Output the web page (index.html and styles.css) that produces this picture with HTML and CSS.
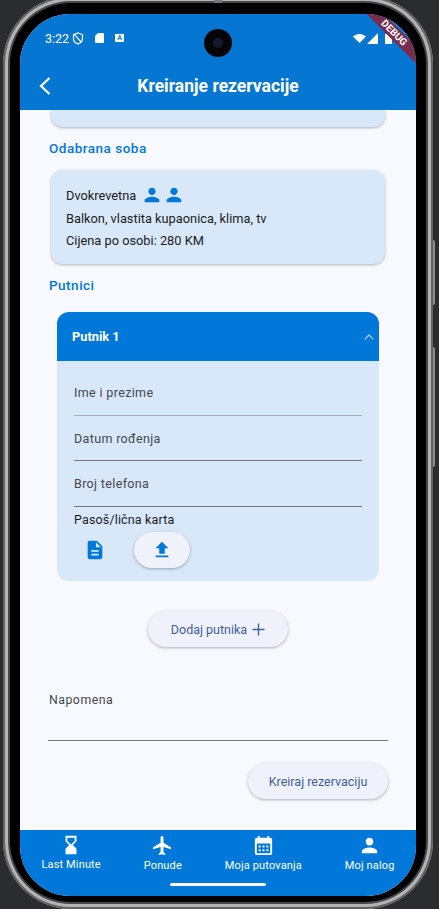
FILE: index.html
```html
<!DOCTYPE html>
<html>
<head>
  <title>Kreiranje rezervacije</title>
  <link rel="stylesheet" href="styles.css">
</head>
<body>
  <div class="device">
    <div class="top-nub"></div>
    <div class="side-btn side-btn-power"></div>
    <div class="side-btn side-btn-volume"></div>
    <div class="screen">
      <div class="camera"><div class="lens"></div></div>
      <div class="debug-banner">DEBUG</div>

      <header class="top">
        <div class="status">
          <div class="status-left">
            <span class="clock">3:22</span>
            <svg class="st-shield" viewBox="0 0 12 13" width="12" height="13"><path d="M6 1l4.500 1.600v4c0 2.600-1.900 4.600-4.500 5.400-2.600-.8-4.500-2.800-4.500-5.400v-4z M2.800 2.800l6.600 7.600" fill="none" stroke="#fff" stroke-width="1.200"/></svg>
            <svg class="st-sd" viewBox="0 0 9 10" width="9" height="10"><path d="M3 0h5a1 1 0 0 1 1 1v8a1 1 0 0 1-1 1H1a1 1 0 0 1-1-1V3z" fill="#fff"/></svg>
            <span class="st-box">A</span>
          </div>
          <div class="status-right">
            <svg viewBox="0 0 13 9" width="13" height="9"><path d="M0 2.600C3.600-.8 9.400-.8 13 2.600L6.500 9z" fill="#fff"/></svg>
            <svg viewBox="0 0 11 11" width="11" height="11"><path d="M11 0v11H0z" fill="#fff"/></svg>
            <svg class="st-bat" viewBox="0 0 7 11" width="7" height="11"><path d="M2 0h3v1h2v10H0V1h2z" fill="#fff"/></svg>
          </div>
        </div>
        <div class="appbar">
          <svg class="back" viewBox="0 0 12 18" width="12" height="18"><path d="M10.500 1L2 9l8.500 8" fill="none" stroke="#fff" stroke-width="2.200"/></svg>
          <h1>Kreiranje rezervacije</h1>
          <span></span>
        </div>
      </header>

      <main class="content">
        <div class="card card-cut">
          <p>Tip smjene</p>
        </div>

        <h2 class="section-title title-room">Odabrana soba</h2>
        <div class="card card-room">
          <div class="room-name">
            <span>Dvokrevetna</span>
            <span class="persons">
              <svg viewBox="0 0 24 24" width="22" height="22"><path d="M12 12c2.210 0 4-1.790 4-4s-1.790-4-4-4-4 1.790-4 4 1.790 4 4 4zm0 2c-2.670 0-8 1.340-8 4v2h16v-2c0-2.660-5.330-4-8-4z"/></svg>
              <svg viewBox="0 0 24 24" width="22" height="22"><path d="M12 12c2.210 0 4-1.790 4-4s-1.790-4-4-4-4 1.790-4 4 1.790 4 4 4zm0 2c-2.670 0-8 1.340-8 4v2h16v-2c0-2.660-5.330-4-8-4z"/></svg>
            </span>
          </div>
          <p>Balkon, vlastita kupaonica, klima, tv</p>
          <p>Cijena po osobi: 280 KM</p>
        </div>

        <h2 class="section-title title-guests">Putnici</h2>
        <section class="panel">
          <div class="panel-head">
            <span>Putnik 1</span>
            <svg viewBox="0 0 10 6" width="10" height="6"><path d="M.8 5.300L5 1l4.200 4.300" fill="none" stroke="#a4cbee" stroke-width="1.300"/></svg>
          </div>
          <div class="panel-body">
            <div class="field field-light">Ime i prezime</div>
            <div class="field">Datum rođenja</div>
            <div class="field field-tall">Broj telefona</div>
            <div class="doc-label">Pasoš/lična karta</div>
            <div class="doc-row">
              <svg viewBox="0 0 24 24" width="22" height="22"><path d="M14 2H6c-1.100 0-1.990.9-1.990 2L4 20c0 1.100.89 2 2 2h12c1.100 0 2-.9 2-2V8l-6-6zm2 16H8v-2h8v2zm0-4H8v-2h8v2zm-3-5V3.500L18.500 9H13z"/></svg>
              <button class="pill pill-upload">
                <svg viewBox="0 0 24 24" width="22" height="22"><path d="M9 16h6v-6h4l-7-7-7 7h4zm-4 2h14v2H5z"/></svg>
              </button>
            </div>
          </div>
        </section>

        <div class="add-row">
          <button class="pill pill-text">Dodaj putnika
            <svg viewBox="0 0 14 14" width="14" height="14"><path d="M7 .5v13M.5 7h13" fill="none" stroke="#3f62a5" stroke-width="1.500"/></svg>
          </button>
        </div>

        <div class="note">Napomena</div>

        <div class="submit-row">
          <button class="pill pill-text">Kreiraj rezervaciju</button>
        </div>
      </main>

      <nav class="bottom">
        <div class="tabs">
          <div class="tab">
            <svg viewBox="0 0 24 24" width="22" height="22"><path d="M18 22l-.01-6L14 12l3.990-4.010L18 2H6v6l4 4-4 3.990V22h12zM8 7.500V4h8v3.500l-4 4-4-4z"/></svg>
            <span>Last Minute</span>
          </div>
          <div class="tab">
            <svg viewBox="0 0 24 24" width="23" height="23"><path d="M21 16v-2l-8-5V3.500c0-.83-.67-1.500-1.500-1.500S10 2.670 10 3.500V9l-8 5v2l8-2.500V19l-2 1.500V22l3.500-1 3.500 1v-1.500L13 19v-5.500l8 2.500z"/></svg>
            <span>Ponude</span>
          </div>
          <div class="tab">
            <svg viewBox="0 0 24 24" width="23" height="23"><path d="M19 4h-1V2h-2v2H8V2H6v2H5c-1.110 0-1.990.9-1.990 2L3 20c0 1.100.89 2 2 2h14c1.100 0 2-.9 2-2V6c0-1.100-.9-2-2-2zm0 16H5V10h14v10zM9 14H7v-2h2v2zm4 0h-2v-2h2v2zm4 0h-2v-2h2v2zm-8 4H7v-2h2v2zm4 0h-2v-2h2v2zm4 0h-2v-2h2v2z"/></svg>
            <span>Moja putovanja</span>
          </div>
          <div class="tab">
            <svg viewBox="0 0 24 24" width="23" height="23"><path d="M12 12c2.210 0 4-1.790 4-4s-1.790-4-4-4-4 1.790-4 4 1.790 4 4 4zm0 2c-2.670 0-8 1.340-8 4v2h16v-2c0-2.660-5.330-4-8-4z"/></svg>
            <span>Moj nalog</span>
          </div>
        </div>
        <div class="home-bar"></div>
      </nav>
    </div>
  </div>
</body>
</html>
```

FILE: styles.css
```css
* {
  box-sizing: border-box;
}

html, body {
  margin: 0;
  height: 909px;
  overflow: hidden;
}

body {
  background-color: #2b2c30;
  font-family: Roboto, sans-serif;
  font-size: 12.800px;
  color: #1a1c1e;
}

p, h1, h2 {
  margin: 0;
}

/* phone frame */
.device {
  position: relative;
  width: 430px;
  height: 913px;
  margin: -4px 0 0 3px;
  padding: 18px 17px 0;
  background-color: #000;
  border-radius: 68px;
  box-shadow:
    inset 0 0 0 2px #626264,
    inset 0 0 0 5px #b4b4b5,
    inset 0 0 0 7px #47474a;
}

.top-nub {
  position: absolute;
  top: 0;
  left: 211px;
  width: 8px;
  height: 7px;
  background-color: #77777a;
}

.side-btn {
  position: absolute;
  right: -2px;
  width: 2px;
  background-color: #8b8b8d;
  border-radius: 0 2px 2px 0;
}

.side-btn-power {
  top: 244px;
  height: 65px;
}

.side-btn-volume {
  top: 351px;
  height: 120px;
}

.screen {
  position: relative;
  display: flex;
  flex-direction: column;
  height: 882px;
  background-color: #f8f9ff;
  border-radius: 50px;
  overflow: hidden;
}

.camera {
  position: absolute;
  top: 15px;
  left: 184px;
  width: 28px;
  height: 28px;
  display: flex;
  align-items: center;
  justify-content: center;
  background-color: #050507;
  border-radius: 50%;
}

.lens {
  width: 10px;
  height: 10px;
  background-color: #1a1730;
  border-radius: 50%;
}

.debug-banner {
  position: absolute;
  top: 13px;
  right: -28px;
  width: 100px;
  height: 12px;
  line-height: 12px;
  text-align: center;
  font-size: 10px;
  font-weight: 700;
  color: #fff;
  background-color: #7a2b4c;
  transform: rotate(45deg);
}

/* status + app bar */
.top {
  flex: none;
  height: 96px;
  padding-top: 14px;
  background-color: #0577d3;
  color: #fff;
}

.status {
  display: flex;
  justify-content: space-between;
  align-items: center;
  height: 20px;
  padding: 0 24px 0 25px;
}

.status-left, .status-right {
  display: flex;
  align-items: center;
}

.clock {
  font-size: 12.500px;
  width: 27px;
}

.st-sd {
  margin-left: 11px;
}

.st-box {
  width: 9px;
  height: 8px;
  margin-left: 11px;
  background-color: #fff;
  color: #0577d3;
  font-size: 7px;
  font-weight: 700;
  line-height: 8px;
  text-align: center;
}

.status-right svg + svg {
  margin-left: 1px;
}

.status-right .st-bat {
  margin-left: 7px;
}

.appbar {
  display: grid;
  grid-template-columns: 1fr auto 1fr;
  align-items: center;
  height: 48px;
  margin-top: 14px;
}

.back {
  margin-left: 19px;
}

.appbar h1 {
  font-size: 17.500px;
  font-weight: 700;
}

/* scrolled form */
.content {
  flex: 1;
  min-height: 0;
  overflow: hidden;
}

.card {
  margin: 0 31px;
  padding: 0 15px;
  background-color: #d8e8f9;
  border-radius: 12px;
  box-shadow: 0 1px 3px rgba(0, 0, 0, .28);
}

.card-cut {
  height: 17px;
  border-radius: 0 0 12px 12px;
}

.card-cut p {
  position: relative;
  top: -17px;
  line-height: 20px;
  letter-spacing: .25px;
}

.section-title {
  margin-left: 29px;
  font-size: 13.500px;
  font-weight: 500;
  letter-spacing: .5px;
  line-height: 18px;
  color: #0078d9;
}

.title-room {
  margin-top: 12px;
}

.title-guests {
  margin-top: 12px;
}

.card-room {
  height: 94px;
  margin-top: 13px;
  padding-top: 14px;
}

.card-room p {
  line-height: 22px;
}

.room-name {
  display: flex;
  align-items: center;
  height: 22px;
  margin-bottom: 2px;
}

.persons {
  display: flex;
  margin-left: 5px;
  fill: #0078d9;
}

.panel {
  width: 322px;
  height: 269px;
  margin: 18px 0 0 37px;
  background-color: #d8e8f9;
  border-radius: 12px;
  overflow: hidden;
}

.panel-head {
  display: flex;
  justify-content: space-between;
  align-items: center;
  height: 49px;
  padding: 0 5px 0 15px;
  background-color: #0078d9;
  color: #fff;
  font-weight: 700;
}

.panel-body {
  padding: 0 17px;
}

.field {
  height: 45px;
  padding-top: 13px;
  font-size: 12.500px;
  line-height: 20px;
  letter-spacing: .35px;
  color: #44474e;
  border-bottom: 1px solid #74777f;
}

.field-light {
  height: 55px;
  padding-top: 22px;
  border-bottom-color: #a3adba;
}

.field-tall {
  height: 46px;
}

.doc-label {
  margin-top: 3px;
  font-size: 12.500px;
  line-height: 20px;
  letter-spacing: .15px;
}

.doc-row {
  display: flex;
  align-items: center;
  height: 36px;
  margin-top: 2px;
  padding-left: 10px;
  fill: #0078d9;
}

.pill {
  display: flex;
  align-items: center;
  justify-content: center;
  height: 36px;
  padding: 0;
  border: none;
  border-radius: 18px;
  background-color: #f0f2fb;
  box-shadow: 0 1px 3px rgba(0, 0, 0, .3);
  font-family: Roboto, sans-serif;
}

.pill-upload {
  width: 56px;
  margin-left: 28px;
  fill: #0078d9;
}

.pill-text {
  width: 140px;
  font-size: 12.500px;
  color: #3f5f98;
}

.pill-text svg {
  width: 13px;
  height: 13px;
  margin-left: 5px;
}

.add-row {
  display: flex;
  justify-content: center;
  margin-top: 30px;
}

.note {
  height: 51px;
  margin: 43px 28px 0;
  padding-left: 1px;
  font-size: 12.300px;
  line-height: 20px;
  letter-spacing: .5px;
  color: #44474e;
  border-bottom: 1px solid #74777f;
}

.submit-row {
  display: flex;
  justify-content: flex-end;
  margin: 22px 28px 0 0;
}

/* bottom nav */
.bottom {
  flex: none;
  height: 66px;
  padding-top: 4px;
  background-color: #0078d9;
  color: #fff;
  fill: #fff;
}

.tabs {
  display: flex;
  justify-content: space-around;
  height: 45px;
}

.tab {
  display: flex;
  flex-direction: column;
  align-items: center;
  font-size: 11px;
  letter-spacing: .15px;
}

.tab svg {
  display: block;
}

.tab span {
  margin-top: 2px;
  line-height: 14px;
}

.home-bar {
  width: 96px;
  height: 3px;
  margin: 4px auto 0;
  background-color: #fff;
  border-radius: 2px;
}
```
